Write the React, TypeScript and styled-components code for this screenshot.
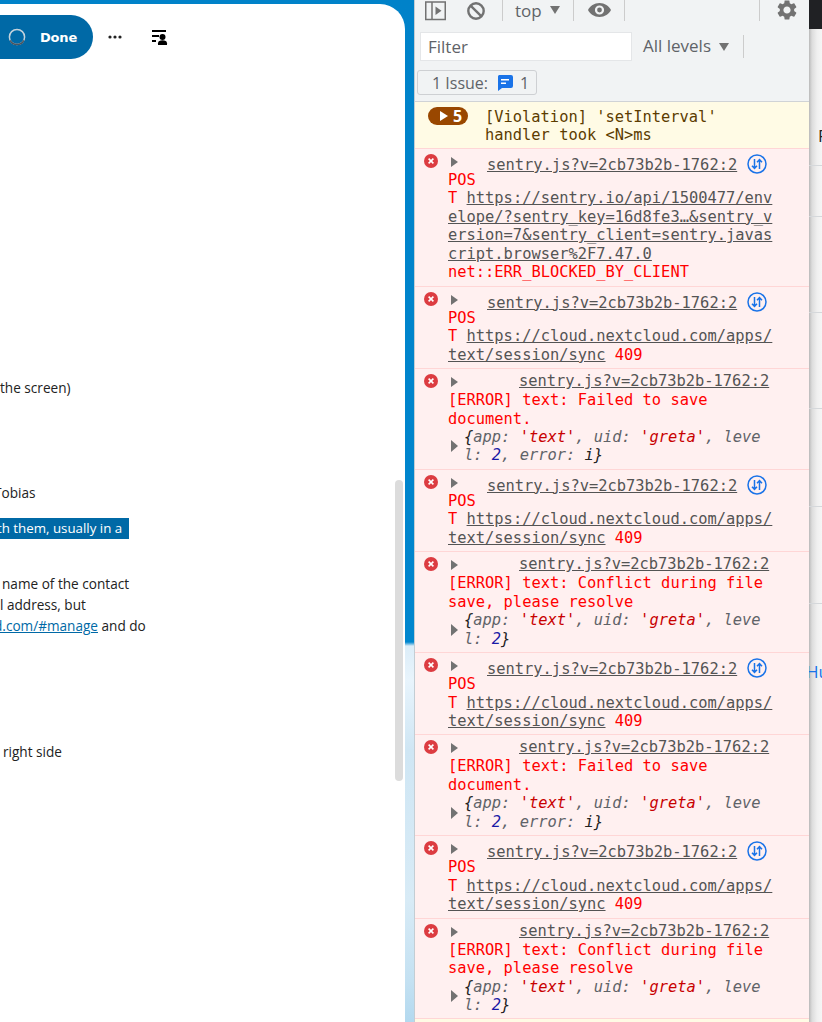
import { FC, ReactNode } from "react";
import styled, { createGlobalStyle } from "styled-components";

const GlobalStyle = createGlobalStyle`
  html, body {
    margin: 0;
    padding: 0;
    overflow: hidden;
  }
`;

const Page = styled.div`
  width: 822px;
  height: 1022px;
  display: flex;
  overflow: hidden;
  font-family: "Open Sans", sans-serif;
`;

/* left: nextcloud editor on its blue background */

const AppColumn = styled.div`
  width: 414px;
  flex-shrink: 0;
  padding-top: 4px;
  box-sizing: border-box;
  background: linear-gradient(
    180deg,
    #0082c9 0,
    #0086ce 642px,
    #dcedf8 646px,
    #e8f4fc 680px,
    #cfe6f4 750px,
    #d8ebf6 900px,
    #c4e1f2 980px,
    #b3d9ef 1022px
  );
`;

const AppPanel = styled.div`
  position: relative;
  width: 405px;
  height: 1018px;
  background: #fff;
  border-top-right-radius: 25px;
  overflow: hidden;
`;

const AppHeader = styled.div`
  display: flex;
  align-items: center;
  height: 44px;
  padding-top: 11px;
`;

const DoneButton = styled.div`
  display: flex;
  align-items: center;
  width: 113px;
  height: 44px;
  margin-left: -20px;
  padding-left: 28px;
  box-sizing: border-box;
  border-radius: 22px;
  background: #0069a6;
  color: #fff;
  font-family: "DejaVu Sans", sans-serif;
  font-size: 13px;
  letter-spacing: -0.2px;
  font-weight: 700;
  gap: 14px;
`;

const HeaderIcon = styled.svg<{ $left: number }>`
  margin-left: ${(p) => p.$left}px;
  flex-shrink: 0;
`;

const Doc = styled.div`
  color: #222;
  font-size: 13.6px;
  line-height: 21px;
  white-space: pre;
`;

const Para = styled.div<{ $gap: number }>`
  margin-top: ${(p) => p.$gap}px;
`;

const DocLine = styled.div<{ $shift?: number }>`
  height: 21px;
  margin-left: ${(p) => p.$shift ?? 0}px;
`;

const Selected = styled.div`
  width: 129px;
  height: 21px;
  background: #0069a6;
  color: #fff;
  font-size: 13.3px;
  overflow: hidden;
`;

const DocLink = styled.span`
  color: #0069a6;
  text-decoration: underline;
`;

const Scrollbar = styled.div`
  position: absolute;
  left: 395px;
  top: 476px;
  width: 8px;
  height: 301px;
  border-radius: 4px;
  background: #dcdcdc;
`;

/* middle: devtools console */

const DevTools = styled.div`
  width: 395px;
  flex-shrink: 0;
  box-sizing: border-box;
  border-left: 1px solid #c3cdd3;
  background: #f1f3f4;
  color: #5f6368;
  overflow: hidden;
`;

const TopBar = styled.div`
  display: flex;
  align-items: flex-start;
  height: 21px;
  margin-top: 0;
`;

const Sep = styled.div<{ $left: number }>`
  width: 1px;
  height: 21px;
  margin-left: ${(p) => p.$left}px;
  background: #ccc;
  flex-shrink: 0;
`;

const BarIcon = styled.svg<{ $left: number; $top?: number }>`
  margin-left: ${(p) => p.$left}px;
  margin-top: ${(p) => p.$top ?? 0}px;
  flex-shrink: 0;
`;

const BarText = styled.span<{ $left: number }>`
  margin-left: ${(p) => p.$left}px;
  font-size: 17px;
  line-height: 21px;
  flex-shrink: 0;
`;

const FilterBar = styled.div`
  display: flex;
  align-items: center;
  height: 29px;
  margin-top: 11px;
  padding-left: 5px;
`;

const FilterInput = styled.div`
  width: 212px;
  height: 29px;
  box-sizing: border-box;
  padding-left: 7px;
  background: #fff;
  border: 1px solid #e4e6e8;
  font-size: 17px;
  line-height: 28px;
`;

const LevelsText = styled.span`
  margin-left: 11px;
  font-size: 17px;
  line-height: 28px;
  margin-top: -2px;
`;

const LevelsSep = styled.div`
  width: 1px;
  height: 23px;
  margin-left: 14px;
  background: #ccc;
`;

const IssueBar = styled.div`
  height: 41px;
  padding: 9px 0 0 2px;
  box-sizing: border-box;
  border-bottom: 1px solid #d0d3d6;
`;

const IssueButton = styled.div`
  display: flex;
  align-items: center;
  width: 120px;
  height: 25px;
  box-sizing: border-box;
  padding-left: 14px;
  border: 1px solid #ced0d3;
  border-radius: 3px;
  font-size: 16px;
`;

const IssueIcon = styled.svg`
  margin-left: 9px;
`;

const IssueCount = styled.span`
  margin-left: 7px;
`;

const Messages = styled.div`
  font-family: "DejaVu Sans Mono", monospace;
  font-size: 15.4px;
  line-height: 18.46px;
  white-space: pre;
`;

const WarnRow = styled.div`
  height: 47px;
  box-sizing: border-box;
  padding: 5px 0 0 13px;
  background: #fffbe5;
  border-bottom: 1px solid #ffd6d6;
  display: flex;
  color: #5c3c00;
`;

const Badge = styled.div`
  display: flex;
  align-items: center;
  width: 40px;
  height: 18px;
  box-sizing: border-box;
  padding-left: 12px;
  gap: 5px;
  border-radius: 9px;
  background: #994700;
  color: #fff;
  font-family: "Open Sans", sans-serif;
  font-size: 16px;
  font-weight: 700;
`;

const WarnText = styled.div`
  margin-left: 17px;
  margin-top: 1px;
`;

const ErrorRow = styled.div`
  padding: 0 0 4px 9px;
  background: #fff0f0;
  border-bottom: 1px solid #ffd6d6;
  color: #f00;
`;

const RowHead = styled.div`
  display: flex;
  align-items: flex-start;
  height: 22px;
`;

const ErrorDot = styled.svg`
  margin-top: 5px;
  flex-shrink: 0;
`;

const Caret = styled.svg<{ $left: number; $top: number }>`
  margin-left: ${(p) => p.$left}px;
  margin-top: ${(p) => p.$top}px;
  flex-shrink: 0;
`;

const SourceLink = styled.span<{ $left: number; $top: number }>`
  margin-left: ${(p) => p.$left}px;
  margin-top: ${(p) => p.$top}px;
  color: #545454;
  text-decoration: underline;
  line-height: 18px;
`;

const NetIcon = styled.svg`
  margin-left: 10px;
  margin-top: 5px;
  flex-shrink: 0;
`;

const Body = styled.div`
  margin-left: 24px;
`;

const UrlLink = styled.span`
  color: #545454;
  text-decoration: underline;
`;

const ObjectBlock = styled.div`
  display: flex;
  align-items: center;
  margin-left: 27px;
`;

const ObjectText = styled.div`
  margin-left: 6px;
  font-style: italic;
  color: #5f6368;
`;

const Str = styled.span`
  color: #c80000;
`;

const Num = styled.span`
  color: #1a1aa6;
`;

const Plain = styled.span`
  color: #222;
`;

/* right: the page behind devtools */

const BehindColumn = styled.div`
  flex: 1;
  min-width: 0;
  overflow: hidden;
`;

const DarkBar = styled.div`
  height: 29px;
  background: #202124;
`;

const BehindRow = styled.div<{ $height: number; $line?: boolean }>`
  height: ${(p) => p.$height}px;
  box-sizing: border-box;
  background: linear-gradient(90deg, #b9b9b9 0, #dcdcdc 3px, #efefef 8px, #f6f6f6 13px);
  border-bottom: ${(p) => (p.$line ? "1px solid #d5d8db" : "none")};
  position: relative;
  overflow: hidden;
`;

const BehindChar = styled.span<{ $color: string; $left: number; $top: number }>`
  position: absolute;
  left: ${(p) => p.$left}px;
  top: ${(p) => p.$top}px;
  color: ${(p) => p.$color};
  font-size: 17px;
  line-height: 18px;
`;

const errorDot = (
  <ErrorDot width="14" height="14" viewBox="0 0 14 14">
    <circle cx="7" cy="7" r="7" fill="#dc3c41" />
    <path d="M4.6 4.6l4.8 4.8M9.4 4.6l-4.8 4.8" stroke="#fff" strokeWidth="1.6" />
  </ErrorDot>
);

const NetworkIcon = () => (
  <NetIcon width="20" height="20" viewBox="0 0 20 20" fill="none" stroke="#1a73e8">
    <circle cx="10" cy="10" r="9" strokeWidth="1.5" />
    <path d="M7.5 5v9.500M5 11.800l2.500 2.700 2.500-2.700M12.500 15V5.500M10 8.200l2.500-2.700 2.500 2.700" strokeWidth="1.500" />
  </NetIcon>
);

const PostRow: FC<{ children: ReactNode }> = ({ children }) => (
  <ErrorRow>
    <RowHead>
      {errorDot}
      <Caret $left={13} $top={8} width="7" height="10" viewBox="0 0 7 10">
        <path d="M0 0l7 5-7 5z" fill="#727272" />
      </Caret>
      <SourceLink $left={29} $top={7}>sentry.js?v=2cb73b2b-1762:2</SourceLink>
      <NetworkIcon />
    </RowHead>
    <Body>{children}</Body>
  </ErrorRow>
);

const LogRow: FC<{ message: ReactNode; object: ReactNode }> = ({ message, object }) => (
  <ErrorRow>
    <RowHead>
      {errorDot}
      <Caret $left={13} $top={8} width="7" height="10" viewBox="0 0 7 10">
        <path d="M0 0l7 5-7 5z" fill="#727272" />
      </Caret>
      <SourceLink $left={61} $top={3}>sentry.js?v=2cb73b2b-1762:2</SourceLink>
    </RowHead>
    <Body>{message}</Body>
    <ObjectBlock>
      <svg width="7" height="12" viewBox="0 0 7 12">
        <path d="M0 0l7 6-7 6z" fill="#727272" />
      </svg>
      <ObjectText>{object}</ObjectText>
    </ObjectBlock>
  </ErrorRow>
);

const SyncBody = () => (
  <>
    POS{"\n"}T <UrlLink>https://cloud.nextcloud.com/apps/</UrlLink>{"\n"}
    <UrlLink>text/session/sync</UrlLink> 409
  </>
);

const FailedObject = () => (
  <>
    <Plain>{"{"}</Plain>app: <Str>'text'</Str>, uid: <Str>'greta'</Str>, leve{"\n"}l: <Num>2</Num>, error: <Plain>i</Plain>
    <Plain>{"}"}</Plain>
  </>
);

const ConflictObject = () => (
  <>
    <Plain>{"{"}</Plain>app: <Str>'text'</Str>, uid: <Str>'greta'</Str>, leve{"\n"}l: <Num>2</Num>
    <Plain>{"}"}</Plain>
  </>
);

const App: FC = () => {
  return (
    <Page>
      <GlobalStyle />
      <AppColumn>
        <AppPanel>
          <AppHeader>
            <DoneButton>
              <svg width="18" height="18" viewBox="0 0 18 18" fill="none">
                <circle cx="9" cy="9" r="7.6" stroke="#c4d3dc" strokeWidth="1.5" />
                <path d="M2.2 12.4a7.6 7.6 0 0 0 13.6 0" stroke="#4a5560" strokeWidth="1.5" />
              </svg>
              Done
            </DoneButton>
            <HeaderIcon $left={15} width="14" height="4" viewBox="0 0 14 4">
              <circle cx="2" cy="2" r="1.6" fill="#222" />
              <circle cx="7" cy="2" r="1.6" fill="#222" />
              <circle cx="12" cy="2" r="1.6" fill="#222" />
            </HeaderIcon>
            <HeaderIcon $left={30} width="16" height="15" viewBox="0 0 16 15">
              <path d="M0 0h14v2H0zM0 5h7v2H0zM0 10h4v2H0z" fill="#000" />
              <circle cx="10.5" cy="7" r="3" fill="#000" />
              <path d="M6 13.2c0-2.2 2-3 4.5-3s4.5.8 4.5 3V15H6z" fill="#000" />
            </HeaderIcon>
          </AppHeader>
          <Doc>
            <Para $gap={318}>
              <DocLine>the screen)</DocLine>
            </Para>
            <Para $gap={84}>
              <DocLine $shift={-6}>Tobias</DocLine>
            </Para>
            <Para $gap={15}>
              <Selected>
                <DocLine $shift={-3}>th them, usually in a</DocLine>
              </Selected>
            </Para>
            <Para $gap={34}>
              <DocLine $shift={2}>name of the contact</DocLine>
              <DocLine $shift={0}>l address, but</DocLine>
              <DocLine $shift={-6}>
                <DocLink>d.com/#manage</DocLink> and do
              </DocLine>
            </Para>
            <Para $gap={105}>
              <DocLine $shift={3}>right side</DocLine>
            </Para>
          </Doc>
          <Scrollbar />
        </AppPanel>
      </AppColumn>

      <DevTools>
        <TopBar>
          <BarIcon $left={10} $top={1} width="21" height="20" viewBox="0 0 21 20" fill="none">
            <rect x="0.75" y="1" width="19.5" height="17.5" stroke="#727272" strokeWidth="1.5" />
            <path d="M7 1v17.5" stroke="#727272" strokeWidth="1.5" />
            <path d="M10.5 5.5l6 4.2-6 4.2z" fill="#727272" />
          </BarIcon>
          <BarIcon $left={21} $top={2} width="18" height="18" viewBox="0 0 18 18" fill="none">
            <circle cx="9" cy="9" r="7.7" stroke="#727272" strokeWidth="2.4" />
            <path d="M3.6 3.6l10.8 10.8" stroke="#727272" strokeWidth="2.4" />
          </BarIcon>
          <Sep $left={17} />
          <BarText $left={12}>top</BarText>
          <BarIcon $left={8} $top={6} width="10" height="8" viewBox="0 0 10 8">
            <path d="M0 0h10L5 8z" fill="#727272" />
          </BarIcon>
          <Sep $left={13} />
          <BarIcon $left={14} $top={3} width="23" height="14" viewBox="0 0 23 14">
            <path
              fillRule="evenodd"
              d="M11.5 0C6.3 0 2 2.9 0 7c2 4.1 6.3 7 11.5 7S21 11.1 23 7c-2-4.100-6.300-7-11.500-7zm0 11.600A4.600 4.600 0 1 1 11.500 2.400a4.600 4.600 0 0 1 0 9.200zm0-7a2.400 2.400 0 1 0 0 4.800 2.400 2.400 0 0 0 0-4.800z"
              fill="#727272"
            />
          </BarIcon>
          <Sep $left={13} />
          <Sep $left={134} />
          <BarIcon $left={17} $top={0} width="20" height="20" viewBox="2.5 2 19 20">
            <path
              fill="#727272"
              fillRule="evenodd"
              d="M19.14 12.94c.04-.3.06-.61.06-.94 0-.32-.02-.64-.07-.94l2.030-1.580c.18-.14.23-.41.12-.61l-1.920-3.320c-.12-.22-.37-.29-.59-.22l-2.390.96c-.5-.38-1.030-.7-1.620-.94l-.36-2.540c-.04-.24-.24-.41-.48-.41h-3.840c-.24 0-.43.17-.47.41l-.36 2.540c-.59.24-1.130.57-1.620.94l-2.390-.96c-.22-.08-.47 0-.59.22L2.740 8.870c-.12.21-.08.47.12.61l2.030 1.580c-.05.3-.09.63-.09.94s.02.64.07.94l-2.030 1.580c-.18.14-.23.41-.12.61l1.920 3.320c.12.22.37.29.59.22l2.390-.96c.5.38 1.030.7 1.620.94l.36 2.540c.05.24.24.41.48.41h3.840c.24 0 .44-.17.47-.41l.36-2.540c.59-.24 1.130-.56 1.620-.94l2.390.96c.22.08.47 0 .59-.22l1.920-3.320c.12-.22.07-.47-.12-.61l-2.010-1.580zM12 15.600c-1.980 0-3.600-1.620-3.600-3.600s1.620-3.600 3.600-3.600 3.600 1.620 3.600 3.600-1.620 3.600-3.600 3.600z"
            />
          </BarIcon>
        </TopBar>

        <FilterBar>
          <FilterInput>Filter</FilterInput>
          <LevelsText>All levels</LevelsText>
          <BarIcon $left={8} width="10" height="8" viewBox="0 0 10 8">
            <path d="M0 0h10L5 8z" fill="#727272" />
          </BarIcon>
          <LevelsSep />
        </FilterBar>

        <IssueBar>
          <IssueButton>
            1 Issue:
            <IssueIcon width="16" height="16" viewBox="0 0 16 16">
              <path d="M2 0h12a2 2 0 0 1 2 2v9a2 2 0 0 1-2 2H5l-4 3V2a2 2 0 0 1 1-2z" fill="#1a73e8" />
              <path d="M4 4h8v1.500H4zM4 7.500h5V9H4z" fill="#fff" />
            </IssueIcon>
            <IssueCount>1</IssueCount>
          </IssueButton>
        </IssueBar>

        <Messages>
          <WarnRow>
            <Badge>
              <svg width="8" height="10" viewBox="0 0 8 10">
                <path d="M0 0l8 5-8 5z" fill="#fff" />
              </svg>
              5
            </Badge>
            <WarnText>
              [Violation] 'setInterval'{"\n"}handler took &lt;N&gt;ms
            </WarnText>
          </WarnRow>

          <PostRow>
            POS{"\n"}T <UrlLink>https://sentry.io/api/1500477/env</UrlLink>{"\n"}
            <UrlLink>elope/?sentry_key=16d8fe3…&amp;sentry_v</UrlLink>{"\n"}
            <UrlLink>ersion=7&amp;sentry_client=sentry.javas</UrlLink>{"\n"}
            <UrlLink>cript.browser%2F7.47.0</UrlLink>{"\n"}net::ERR_BLOCKED_BY_CLIENT
          </PostRow>
          <PostRow>
            <SyncBody />
          </PostRow>
          <LogRow message={"[ERROR] text: Failed to save\ndocument."} object={<FailedObject />} />
          <PostRow>
            <SyncBody />
          </PostRow>
          <LogRow
            message={"[ERROR] text: Conflict during file\nsave, please resolve"}
            object={<ConflictObject />}
          />
          <PostRow>
            <SyncBody />
          </PostRow>
          <LogRow message={"[ERROR] text: Failed to save\ndocument."} object={<FailedObject />} />
          <PostRow>
            <SyncBody />
          </PostRow>
          <LogRow
            message={"[ERROR] text: Conflict during file\nsave, please resolve"}
            object={<ConflictObject />}
          />
          <WarnRow />
        </Messages>
      </DevTools>

      <BehindColumn>
        <DarkBar />
        <BehindRow $height={137} $line>
          <BehindChar $color="#222" $left={9} $top={98}>
            F
          </BehindChar>
        </BehindRow>
        <BehindRow $height={51} $line />
        <BehindRow $height={96} $line />
        <BehindRow $height={96} $line />
        <BehindRow $height={98} $line />
        <BehindRow $height={97} $line />
        <BehindRow $height={418}>
          <BehindChar $color="#1a73e8" $left={-3} $top={59}>
            Hu
          </BehindChar>
        </BehindRow>
      </BehindColumn>
    </Page>
  );
};

export default App;
